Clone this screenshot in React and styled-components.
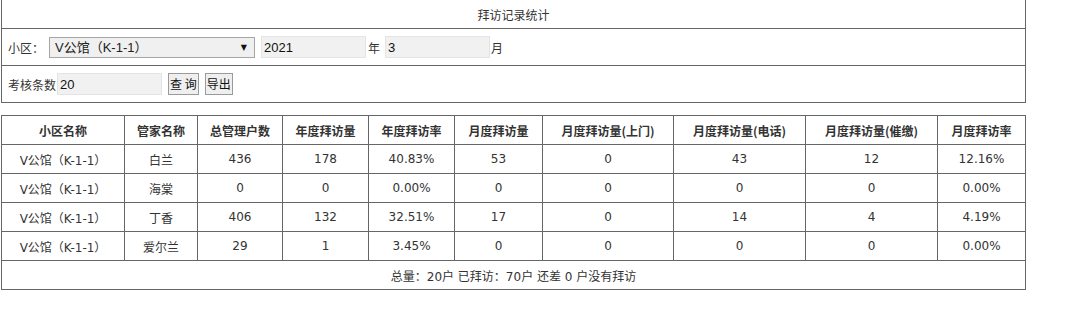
import React from "react";
import styled, { createGlobalStyle } from "styled-components";

const GlobalStyle = createGlobalStyle`
  html, body { margin: 0; padding: 0; background: #fff; }
  body {
    font-family: "DejaVu Sans", "Noto Sans CJK SC", sans-serif;
    font-size: 12px;
    color: #333;
  }
`;

const Page = styled.div`
  padding-left: 1px;
  width: 1025px;
`;

const Panel = styled.div`
  border: 1px solid #666;
  border-top: none;
`;

const TitleRow = styled.div`
  height: 28px;
  display: flex;
  align-items: center;
  justify-content: center;
  border-bottom: 1px solid #666;
  font-family: "Noto Sans CJK SC", sans-serif;
  font-size: 12px;
  color: #333;
`;

const FormRow = styled.div`
  height: 36px;
  display: flex;
  align-items: center;
  padding-left: 6px;
  border-bottom: ${(p) => (p.$last ? "none" : "1px solid #666")};
  font-family: "Noto Sans CJK SC", sans-serif;
  font-size: 12px;
  color: #333;
`;

const Label = styled.span`
  margin-right: ${(p) => p.$gap || 0}px;
  margin-left: ${(p) => p.$left || 0}px;
  white-space: nowrap;
`;

const SelectWrap = styled.span`
  position: relative;
  display: inline-flex;
  margin-right: 6px;
`;

const Select = styled.select`
  appearance: none;
  -webkit-appearance: none;
  width: 206px;
  height: 21px;
  box-sizing: border-box;
  border: 1px solid #a6a6a6;
  background: #f0f0f0;
  padding: 0 20px 0 5px;
  font-family: "Liberation Sans", "Noto Sans CJK SC", sans-serif;
  font-size: 13px;
  color: #222;
  outline: none;
  border-radius: 0;
`;

const Arrow = styled.span`
  position: absolute;
  right: 8px;
  top: 50%;
  transform: translateY(-50%);
  font-size: 8px;
  color: #111;
  pointer-events: none;
  font-family: "DejaVu Sans", sans-serif;
`;

const TextInput = styled.input`
  width: 105px;
  height: 22px;
  box-sizing: border-box;
  border: 1px solid #e4e4e4;
  background: #f1f1f1;
  padding: 0 2px;
  font-family: "Liberation Sans", sans-serif;
  font-size: 13px;
  color: #111;
  outline: none;
  margin-right: ${(p) => p.$gap || 0}px;
`;

const Button = styled.button`
  height: 22px;
  box-sizing: border-box;
  border: 1px solid #9a9a9a;
  background: #efefef;
  padding: 0 1px;
  font-family: "Noto Sans CJK SC", sans-serif;
  font-size: 12px;
  color: #111;
  margin-right: 6px;
  border-radius: 0;
  line-height: 1;
`;

const Table = styled.table`
  margin-top: 12px;
  width: 1025px;
  border-collapse: collapse;
  table-layout: fixed;
  font-family: "DejaVu Sans", "Noto Sans CJK SC", sans-serif;
  font-size: 12px;
  color: #333;
`;

const Th = styled.th`
  height: 28px;
  border: 1px solid #666;
  font-weight: bold;
  text-align: center;
  padding: 0;
  font-family: "Noto Sans CJK SC", sans-serif;
  white-space: nowrap;
`;

const Td = styled.td`
  height: 28px;
  border: 1px solid #666;
  text-align: center;
  padding: 0;
  white-space: nowrap;
`;

const widths = [123, 73, 85, 86, 86, 88, 131, 132, 132, 88];
const headers = [
  "小区名称",
  "管家名称",
  "总管理户数",
  "年度拜访量",
  "年度拜访率",
  "月度拜访量",
  "月度拜访量(上门)",
  "月度拜访量(电话)",
  "月度拜访量(催缴)",
  "月度拜访率",
];
const rows = [
  ["V公馆（K-1-1）", "白兰", "436", "178", "40.83%", "53", "0", "43", "12", "12.16%"],
  ["V公馆（K-1-1）", "海棠", "0", "0", "0.00%", "0", "0", "0", "0", "0.00%"],
  ["V公馆（K-1-1）", "丁香", "406", "132", "32.51%", "17", "0", "14", "4", "4.19%"],
  ["V公馆（K-1-1）", "爱尔兰", "29", "1", "3.45%", "0", "0", "0", "0", "0.00%"],
];

export default function App() {
  return (
    <>
      <GlobalStyle />
      <Page>
        <Panel>
          <TitleRow>拜访记录统计</TitleRow>
          <FormRow>
            <Label $gap={5}>小区：</Label>
            <SelectWrap>
              <Select defaultValue="k">
                <option value="k">V公馆（K-1-1）</option>
              </Select>
              <Arrow>▼</Arrow>
            </SelectWrap>
            <TextInput defaultValue="2021" />
            <Label $left={2} $gap={5}>年</Label>
            <TextInput defaultValue="3" />
            <Label $left={1}>月</Label>
          </FormRow>
          <FormRow $last>
            <Label $gap={1}>考核条数</Label>
            <TextInput defaultValue="20" $gap={6} />
            <Button>查 询</Button>
            <Button>导出</Button>
          </FormRow>
        </Panel>
        <Table>
          <colgroup>
            {widths.map((w, i) => (
              <col key={i} style={{ width: w }} />
            ))}
          </colgroup>
          <thead>
            <tr>
              {headers.map((h) => (
                <Th key={h}>{h}</Th>
              ))}
            </tr>
          </thead>
          <tbody>
            {rows.map((r, i) => (
              <tr key={i}>
                {r.map((c, j) => (
                  <Td key={j}>{c}</Td>
                ))}
              </tr>
            ))}
            <tr>
              <Td colSpan={10}>总量：20户 已拜访：70户 还差 0 户没有拜访</Td>
            </tr>
          </tbody>
        </Table>
      </Page>
    </>
  );
}
